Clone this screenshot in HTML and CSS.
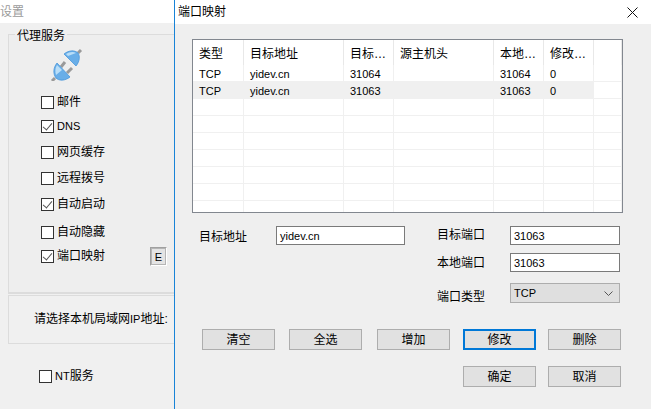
FILE: index.html
```html
<!DOCTYPE html>
<html lang="zh">
<head>
<meta charset="utf-8">
<title>端口映射</title>
<link rel="stylesheet" href="styles.css">
</head>
<body>
<section class="window settings">
  <header class="titlebar settings-title">设置</header>
  <div class="settings-body">
    <fieldset class="group proxy">
      <legend>代理服务</legend>
      <svg class="plug" viewBox="0 0 33 33" width="33" height="33" aria-hidden="true">
        <path d="M11 19l4-5M17 25l5-5" stroke="#9a9a9a" stroke-width="3" fill="none"/>
        <path d="M28 5l3-3M5 30l-3 3" stroke="#9a9a9a" stroke-width="3" fill="none"/>
        <path d="M14 6L26 18C30 13 30 8 28 5C25 2 19 2 14 6z" fill="#69aee8" stroke="#4a97da" stroke-width=".8"/>
        <path d="M16 6C19 4 23 3 26 5L18 8z" fill="#b9def8"/>
        <path d="M7 15L20 29C15 33 9 33 6 30C3 26 3 20 7 15z" fill="#69aee8" stroke="#4a97da" stroke-width=".8"/>
        <path d="M7 17C5 20 5 24 6 27L12 22z" fill="#b9def8"/>
      </svg>
      <div class="options">
        <label class="check"><span class="box"></span>邮件</label>
        <label class="check"><span class="box on"></span><span class="latin">DNS</span></label>
        <label class="check"><span class="box"></span>网页缓存</label>
        <label class="check"><span class="box"></span>远程拨号</label>
        <label class="check"><span class="box on"></span>自动启动</label>
        <label class="check"><span class="box"></span>自动隐藏</label>
        <div class="check-row">
          <label class="check"><span class="box on"></span>端口映射</label>
          <span class="e-btn"><span>E</span></span>
        </div>
      </div>
    </fieldset>
    <div class="group ip">请选择本机局域网<span class="latin">IP</span>地址:</div>
    <label class="check nt"><span class="box"></span><span><span class="latin">NT</span>服务</span></label>
  </div>
</section>

<section class="window dialog">
  <header class="titlebar dialog-title">
    <span>端口映射</span>
    <svg class="close" viewBox="0 0 11 11" width="11" height="11" aria-hidden="true"><path d="M.5.5l10 10M10.5.5l-10 10" stroke="#111" stroke-width="1" fill="none"/></svg>
  </header>
  <div class="dialog-body">
    <div class="list">
      <table>
        <colgroup><col class="c1"><col class="c2"><col class="c3"><col class="c2"><col class="c3"><col class="c3"><col></colgroup>
        <thead>
          <tr><th>类型</th><th>目标地址</th><th>目标…</th><th>源主机头</th><th>本地…</th><th>修改…</th><th></th></tr>
        </thead>
        <tbody>
          <tr><td>TCP</td><td>yidev.cn</td><td>31064</td><td></td><td>31064</td><td>0</td><td></td></tr>
          <tr class="selected"><td>TCP</td><td>yidev.cn</td><td>31063</td><td></td><td>31063</td><td>0</td><td></td></tr>
          <tr><td></td><td></td><td></td><td></td><td></td><td></td><td></td></tr>
          <tr><td></td><td></td><td></td><td></td><td></td><td></td><td></td></tr>
          <tr><td></td><td></td><td></td><td></td><td></td><td></td><td></td></tr>
          <tr><td></td><td></td><td></td><td></td><td></td><td></td><td></td></tr>
          <tr><td></td><td></td><td></td><td></td><td></td><td></td><td></td></tr>
          <tr><td></td><td></td><td></td><td></td><td></td><td></td><td></td></tr>
          <tr><td></td><td></td><td></td><td></td><td></td><td></td><td></td></tr>
        </tbody>
      </table>
    </div>

    <div class="form">
      <div class="form-left">
        <span class="label">目标地址</span>
        <span class="field wide">yidev.cn</span>
      </div>
      <div class="form-right">
        <span class="label">目标端口</span><span class="field">31063</span>
        <span class="label">本地端口</span><span class="field">31063</span>
        <span class="label type-label">端口类型</span>
        <span class="select">TCP
          <svg viewBox="0 0 9 5" width="9" height="5" aria-hidden="true"><path d="M.5.5l4 4 4-4" stroke="#555" stroke-width="1" fill="none"/></svg>
        </span>
      </div>
    </div>

    <div class="actions">
      <button>清空</button>
      <button>全选</button>
      <button>增加</button>
      <button class="focus">修改</button>
      <button>删除</button>
      <button class="ok">确定</button>
      <button>取消</button>
    </div>
  </div>
</section>
</body>
</html>
```
FILE: styles.css
```css
* { box-sizing: border-box; }
html, body { margin: 0; padding: 0; }
body {
  width: 651px;
  height: 409px;
  overflow: hidden;
  position: relative;
  background: #f0f0f0;
  color: #000;
  font: 12px/16px "Liberation Sans", "Noto Sans CJK SC", sans-serif;
}
.window { position: absolute; top: 0; height: 409px; background: #f0f0f0; }
.titlebar { background: #fff; display: flex; align-items: center; }
.latin { font-size: 11px; }

.settings { left: 0; width: 174px; }
.settings-title { height: 23px; color: #9b9b9b; }
.settings-body { padding: 1px 0 0 8px; width: 240px; }
.group { border: 1px solid #dcdcdc; border-right: 0; margin: 0; }
.proxy {
  height: 270px;
  padding: 0;
  background: #eeeeee;
  border-bottom-width: 2px;
}
.proxy legend { margin-left: 6px; padding: 4px 2px 0; line-height: 16px; height: 20px; }
.plug { display: block; margin: 4px 0 0 41px; }
.options {
  display: grid;
  grid-template-rows: 24px 24px 28px 24px 28px 28px 20px;
  margin: 9px 0 0 32px;
  width: 126px;
}
.check { display: flex; align-items: center; gap: 3px; white-space: nowrap; }
.check-row { display: flex; align-items: center; justify-content: space-between; }
.box {
  width: 13px;
  height: 13px;
  border: 1px solid #333;
  background: #fff;
  flex: none;
  position: relative;
}
.box.on::after {
  content: "";
  position: absolute;
  left: 3px;
  top: 0;
  width: 4px;
  height: 8px;
  border: solid #555;
  border-width: 0 1.5px 1.5px 0;
  transform: rotate(40deg);
}
.e-btn {
  width: 17px;
  height: 19px;
  border: 1px solid #a0a0a0;
  border-right-color: #fff;
  border-bottom-color: #fff;
  display: flex;
  background: #fff;
}
.e-btn span {
  flex: 1;
  background: #e4e4e4;
  border: 1px solid #b5b5b5;
  text-align: center;
  line-height: 16px;
  font-size: 11px;
}
.ip { height: 49px; padding: 15px 0 0 25px; border-top: 1px solid #dcdcdc; margin-top: 1px; }
.nt { margin: 24px 0 0 31px; }

.dialog { left: 174px; width: 477px; border-left: 1px solid #1883d7; }
.dialog-title { height: 24px; padding: 0 13px 0 3px; justify-content: space-between; }
.dialog-body { padding: 15px 0 0 17px; background: #efefef; height: 385px; }
.list {
  width: 431px;
  height: 174px;
  border: 1px solid #82878f;
  background: #fff;
  overflow: hidden;
}
table { border-collapse: separate; border-spacing: 0; table-layout: fixed; width: 429px; }
.c1 { width: 51px; }
.c2 { width: 100px; }
.c3 { width: 50px; }
th {
  height: 25px;
  font-weight: 400;
  text-align: left;
  padding: 2px 6px 0;
  white-space: nowrap;
  overflow: hidden;
  box-shadow: inset -1px 0 0 #e8e8e8;
}
td {
  height: 17px;
  padding: 2px 6px 0;
  font-size: 11px;
  line-height: 14px;
  border-right: 1px solid #f0f0f0;
  border-bottom: 1px solid #f0f0f0;
  white-space: nowrap;
  overflow: hidden;
}
.selected td { background: #f0f0f0; }
.selected td:last-child { background: #fff; }

.form { display: flex; justify-content: space-between; margin-top: 13px; width: 428px; }
.form-left { display: flex; align-items: center; gap: 29px; height: 19px; padding-left: 7px; width: 214px; }
.form-left .label { flex: none; padding-top: 3px; }
.form-right {
  display: grid;
  grid-template-columns: 73px 110px;
  grid-template-rows: 19px 19px 20px;
  row-gap: 8px;
  align-items: center;
  width: 183px;
}
.type-label { margin-top: 14px; }
.form-right .label:first-child { margin-bottom: 2px; }
.label { white-space: nowrap; }
.field {
  display: flex;
  align-items: center;
  height: 19px;
  padding: 1px 0 0 3px;
  background: #fff;
  border: 1px solid #7a7a7a;
  font-size: 11px;
}
.field.wide { width: 129px; flex: none; }
.select {
  display: flex;
  align-items: center;
  justify-content: space-between;
  height: 20px;
  margin-top: 6px;
  padding: 0 6px 0 3px;
  background: #dfdfdf;
  border: 1px solid #adadad;
  font-size: 11px;
}

.actions {
  display: grid;
  grid-template-columns: 87px 88px 86px 85px 73px;
  grid-template-rows: 21px 21px;
  row-gap: 16px;
  margin: 29px 0 0 10px;
  width: 419px;
}
.ok { grid-column: 4; }
button {
  width: 73px;
  height: 21px;
  padding: 0;
  font: inherit;
  line-height: 16px;
  color: #000;
  background: #e1e1e1;
  border: 1px solid #adadad;
}
button.focus { border: 2px solid #0078d7; }
```
